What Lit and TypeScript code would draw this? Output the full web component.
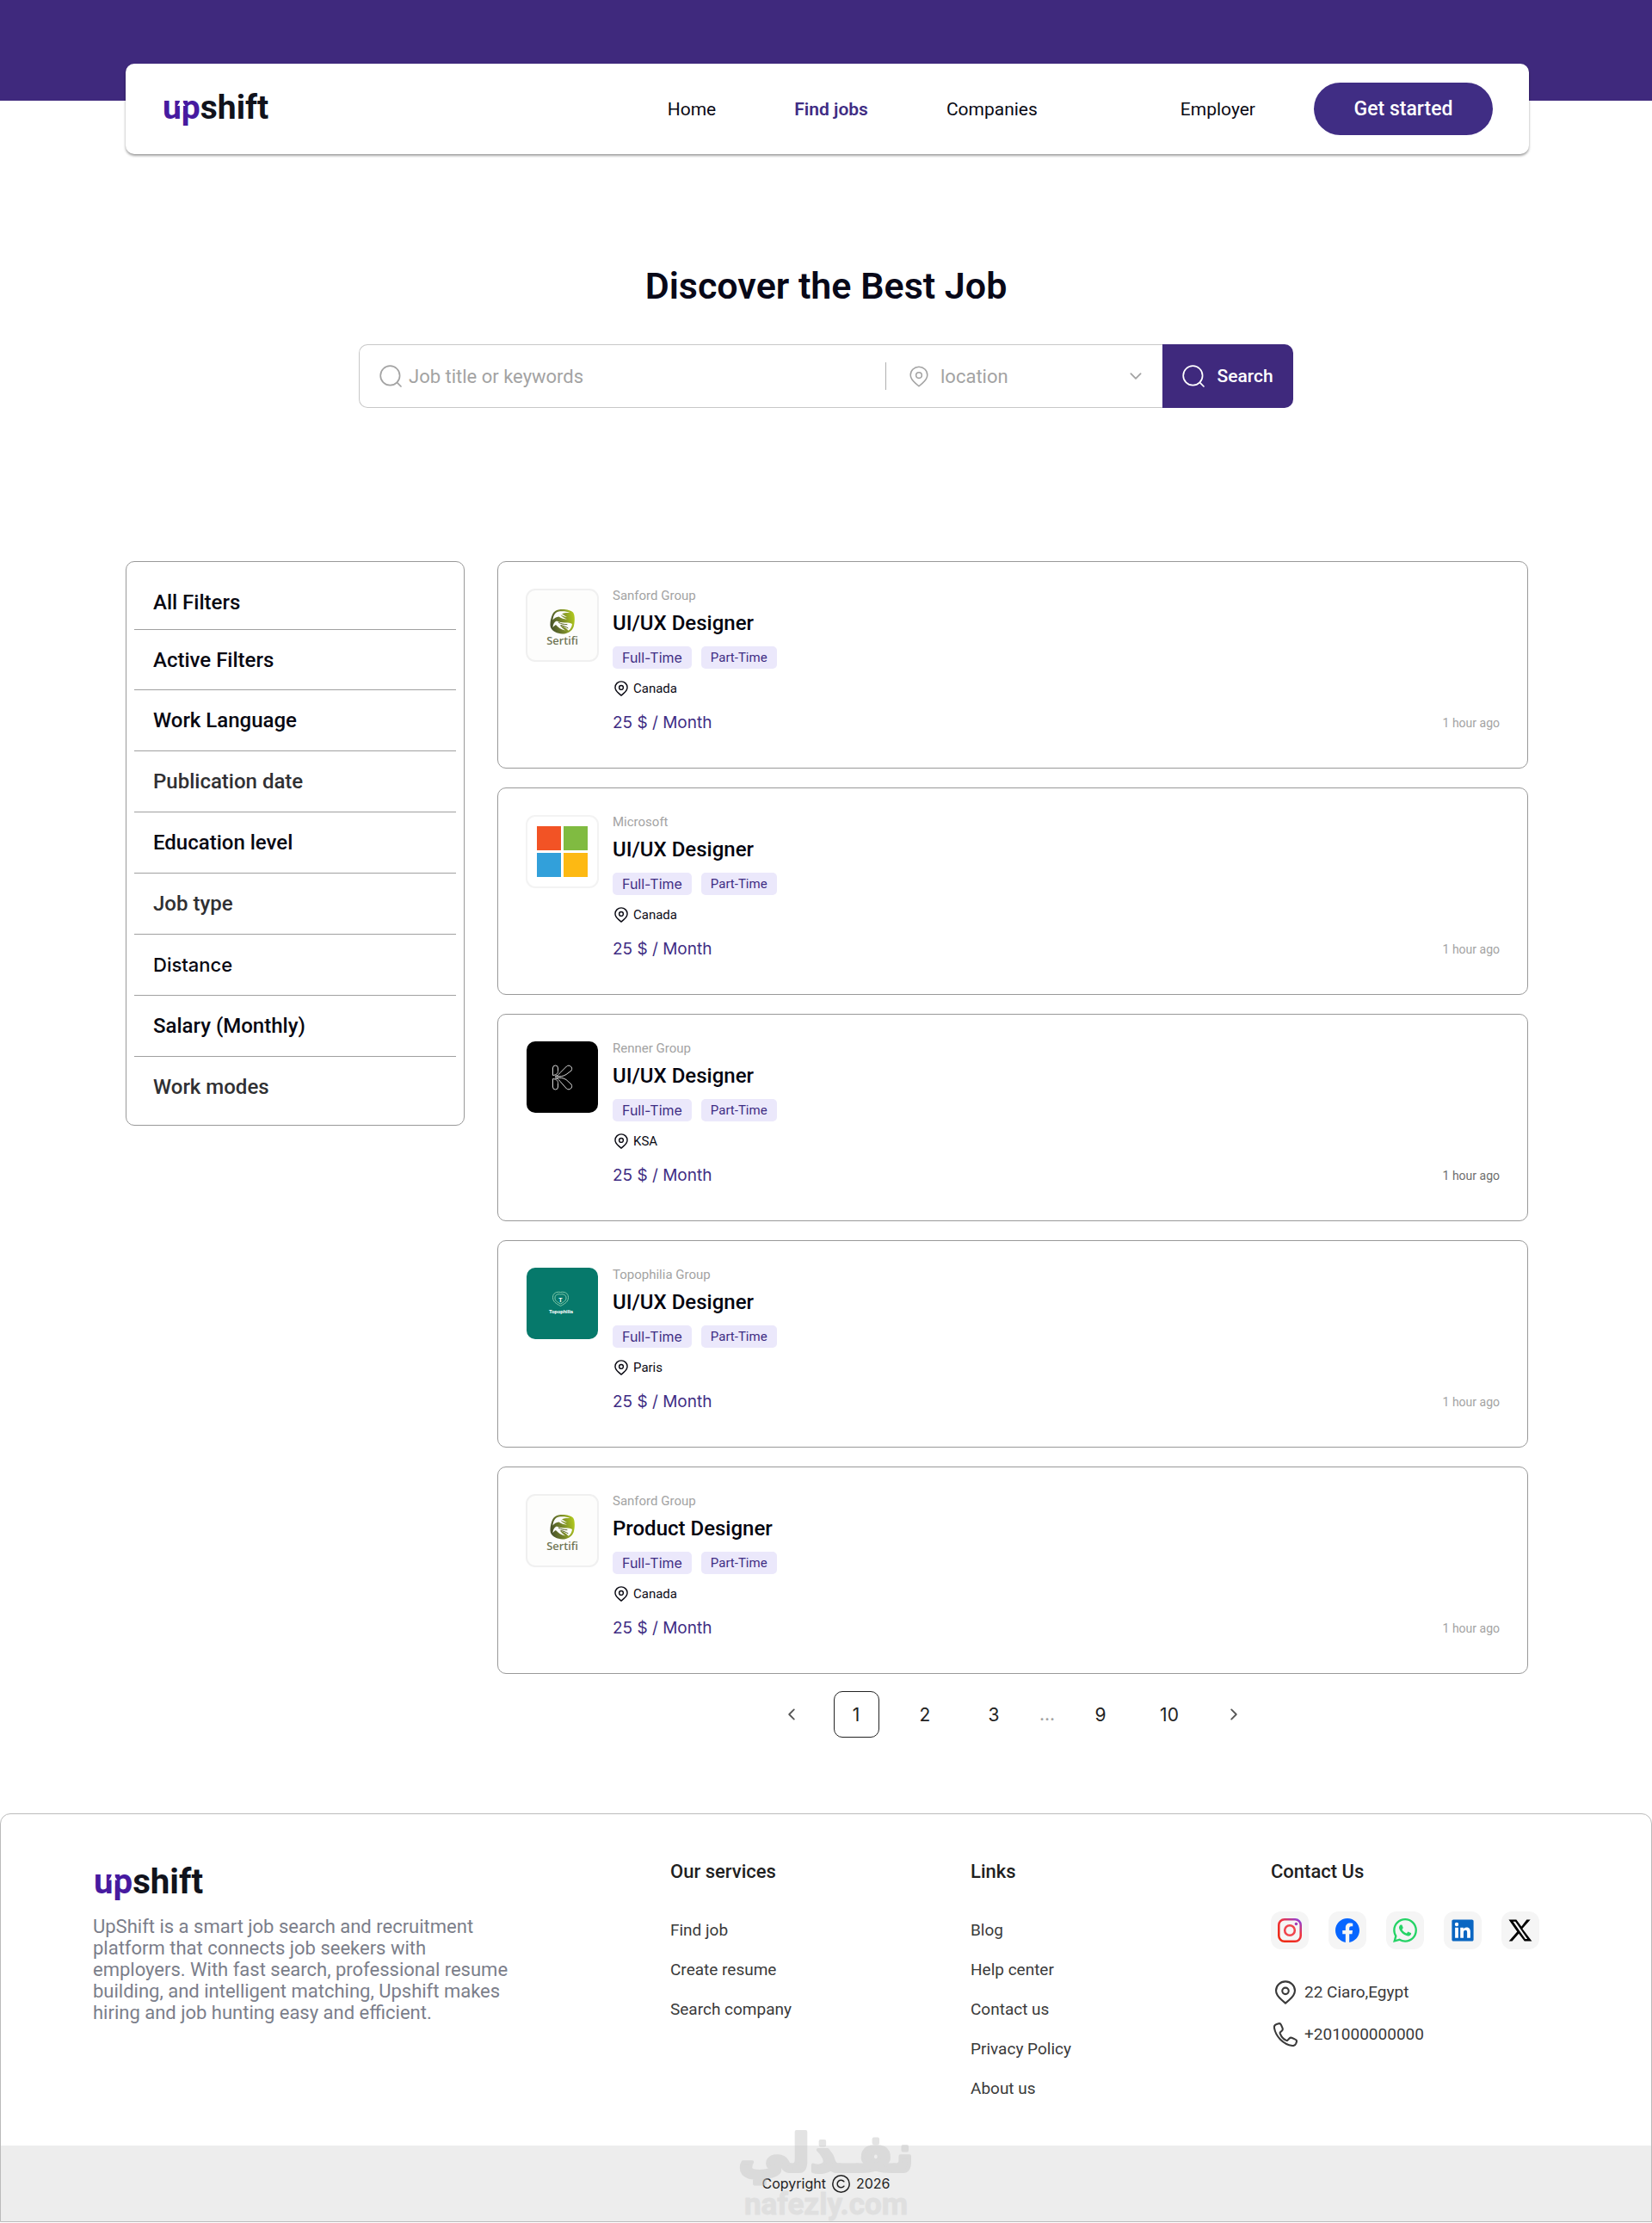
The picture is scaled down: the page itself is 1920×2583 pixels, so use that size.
import { LitElement, html, css, svg } from "lit";
import { customElement, property, state } from "lit/decorators.js";
import { classMap } from "lit/directives/class-map.js";

const PIN_OUTLINE = "M12 1.2c5.2 0 9.4 4 9.4 9.1 0 4-2.6 6.6-5.6 9.2L12 22.8l-3.8-3.3c-3-2.6-5.6-5.2-5.6-9.2 0-5.1 4.2-9.1 9.4-9.1z";

const pinIcon = html`<svg class="pin" viewBox="0 0 24 24" fill="none" stroke="currentColor" stroke-width="1.9" stroke-linejoin="round" aria-hidden="true">
  <path d=${PIN_OUTLINE} /><circle cx="12" cy="10.6" r="3.2" />
</svg>`;

const searchIcon = html`<svg class="glass" viewBox="0 0 26 26" fill="none" stroke="currentColor" stroke-width="1.7" stroke-linecap="round" aria-hidden="true">
  <circle cx="12.4" cy="12.4" r="11.2" /><path d="M20.4 20.4 25 25" />
</svg>`;

const chevron = (d: string) => html`<svg class="chevron" viewBox="0 0 16 16" fill="none" stroke="currentColor" stroke-width="1.6" stroke-linecap="round" stroke-linejoin="round" aria-hidden="true"><path d=${d} /></svg>`;

@customElement("upshift-logo")
class UpshiftLogo extends LitElement {
  static styles = css`
    :host { display: block; }
    svg { display: block; width: 100%; overflow: visible; }
    .word { font: 700 39px Roboto, "Liberation Sans", sans-serif; fill: #11131c; }
    .accent { fill: #471aa0; }
    .arrow { fill: #fff; }
  `;
  render() {
    return html`<svg viewBox="0 0 124 44" role="img" aria-label="upshift">
      <text class="word" x="-1" y="33"><tspan class="accent">up</tspan>shift</text>
      <path class="arrow" d="M20.500 11l5 7h-3v7h-3v-7h-3.500z" />
    </svg>`;
  }
}

@customElement("company-mark")
class CompanyMark extends LitElement {
  @property() name = "";
  static styles = css`
    :host { display: block; width: 85px; height: 85px; }
    svg { display: block; width: 85px; height: 85px; }
    .sertifi { font: 500 13px "Noto Sans", sans-serif; fill: #6c7350; }
    .topo { font: 700 6px Roboto, sans-serif; fill: #fff; }
    .topo-t { font: 700 7px Roboto, sans-serif; fill: #fff; }
  `;

  private sertifi() {
    return svg`
      <defs><linearGradient id="leaf" x1="0" y1=".6" x2="1" y2=".4"><stop offset="0" stop-color="#46502a"/><stop offset=".5" stop-color="#77872a"/><stop offset="1" stop-color="#b0c81e"/></linearGradient></defs>
      <rect x="1" y="1" width="83" height="83" rx="10" fill="#fdfdfc" stroke="#f0f0f0" stroke-width="2"/>
      <path fill="url(#leaf)" d="M38 24.500c6-1.200 14 0 17 3 2.500 3 2.200 12 .6 17-2 5.500-8 8.200-13 8-6-.3-12-3.200-13.600-7.500-1.400-4.500.5-12 2.500-16 1.500-2.700 4-4 6.500-4.500z"/>
      <path fill="#fdfdfc" d="M31.500 36.500c.4-5 2.500-8.800 6-9.800 4.500-1 10.500-.4 13.800 1.300-4-.2-7 .2-9.300 1.300 2.300 1.200 4 2.700 6 3.800-3-.4-5.300-1.400-7.500-2.800 1.500 2.300 4.200 4.200 7.500 5.200-3.600 0-7-1-9.500-3-2.800.4-5.500 1.700-7 4z"/>
      <path fill="#fdfdfc" d="M36 37.500c3.400 1.800 7 2 10.500 1.900 3 0 5.600.4 7.500 1.600-.4 3.400-1.900 6.300-4.300 7.800-2.700-3.400-6.300-5-10.200-6.500 1.600 2.200 4 4.200 6.500 6.200-5-1.200-8.600-3.500-11-6.500-1.200.5-2.400 1.500-3.500 3 .2-3.500 1.700-6.500 4.500-7.500z"/>
      <path fill="none" stroke="#5c6828" stroke-width="1" stroke-linecap="round" d="M38.500 39.500c3 1.600 6 2 9.500 2.200M41 42.500c3 .6 5.500 1.600 8 3.200"/>
      <text class="sertifi" x="42.500" y="65" text-anchor="middle">Sertifi</text>`;
  }

  private microsoft() {
    return svg`
      <rect x="1" y="1" width="83" height="83" rx="10" fill="#fff" stroke="#f3f3f3" stroke-width="2"/>
      <rect x="13" y="13" width="28" height="28" fill="#f25325"/><rect x="44" y="13" width="28" height="28" fill="#80bb41"/>
      <rect x="13" y="44" width="28" height="28" fill="#32a0da"/><rect x="44" y="44" width="28" height="28" fill="#fdb913"/>`;
  }

  private renner() {
    return svg`
      <rect x="1" y="0" width="83" height="83" rx="10" fill="#000"/>
      <g fill="none" stroke="#d8d8d8" stroke-width="1">
        <path d="M31.500 39.500V31a3 3 0 0 1 6 0v3.500c0 3-2 4.500-6 5z"/>
        <path d="M31.500 43.500V53a3 3 0 0 0 6 0v-4.500c0-3-2-4.500-6-5z"/>
        <path d="M34 40.500c3-.5 4-1.500 6-4l7.500-7.500c3-2.500 8 1 5.500 5l-6 4.500c-4 2.500-7 2.500-13 2z"/>
        <path d="M34 42.500c3 .5 4 1.500 6 4l7.500 8.500c3 2.500 8-1 5.500-5l-6-5.500c-4-2.500-7-2.500-13-2z"/>
      </g>`;
  }

  private topophilia() {
    return svg`
      <rect x="1" y="0" width="83" height="83" rx="10" fill="#06796b"/>
      <g fill="none" stroke="#8fd0b0" stroke-width=".9">
        <path d="M40.500 28.500c4.500-1 9 1 9 6s-3.500 7-9 10c-5.500-3-9-5-9-10s4.500-7 9-6z"/>
        <path d="M40.500 31c3.500-.8 6.500.8 6.500 4s-2 4.500-6.500 7c-4.500-2.500-6.500-3.500-6.500-7s3-4.800 6.500-4z"/>
      </g>
      <text class="topo-t" x="40.500" y="39.500" text-anchor="middle">T</text>
      <text class="topo" x="41" y="53" text-anchor="middle">Topophilia</text>`;
  }

  render() {
    const marks: Record<string, () => unknown> = {
      sertifi: () => this.sertifi(), microsoft: () => this.microsoft(),
      renner: () => this.renner(), topophilia: () => this.topophilia(),
    };
    return html`<svg viewBox="0 0 85 85" aria-hidden="true">${marks[this.name]?.()}</svg>`;
  }
}

interface Job { mark: string; company: string; title: string; place: string; recent?: boolean; }

@customElement("job-card")
class JobCard extends LitElement {
  @property({ attribute: false }) job!: Job;
  static styles = css`
    :host { display: block; }
    .card { box-sizing: border-box; min-height: 241px; display: flex; gap: 16px; align-items: flex-start; padding: 31px 32px; border: 1px solid #999; border-radius: 10px; background: #fff; }
    .body { flex: 1; display: flex; flex-direction: column; align-items: flex-start; }
    .company { font-size: 15px; line-height: 16px; color: #a3a3a3; }
    h2 { margin: 10px 0 13px; font-size: 24px; line-height: 28px; font-weight: 500; color: #03030f; }
    .chips { display: flex; gap: 11px; margin: 0; padding: 0; list-style: none; }
    .chip { padding: 0 11px; border-radius: 5px; background: #ebe8fb; color: #3f2d84; font-size: 15px; line-height: 26px; }
    .full { font-family: Inter, sans-serif; font-size: 16px; }
    .place { display: flex; align-items: center; gap: 4px; margin-top: 13px; font-size: 15px; line-height: 20px; color: #0b0b14; }
    .pin { width: 20px; height: 18px; }
    .foot { align-self: stretch; display: flex; justify-content: space-between; align-items: center; margin-top: 18px; line-height: 24px; }
    .pay { font-family: Inter, sans-serif; font-size: 19px; color: #3f2d84; }
    time { font-size: 14px; color: #a3a3a3; }
    .recent { color: #6e6e6e; }
  `;
  render() {
    const j = this.job;
    return html`<article class="card">
      <company-mark name=${j.mark}></company-mark>
      <div class="body">
        <span class="company">${j.company}</span>
        <h2>${j.title}</h2>
        <ul class="chips"><li class="chip full">Full-Time</li><li class="chip">Part-Time</li></ul>
        <span class="place">${pinIcon}${j.place}</span>
        <div class="foot"><span class="pay">25 $ / Month</span><time class=${classMap({ recent: !!j.recent })}>1 hour ago</time></div>
      </div>
    </article>`;
  }
}

@customElement("site-header")
class SiteHeader extends LitElement {
  static styles = css`
    :host { display: block; padding: 74px 143px 0 146px; background: linear-gradient(#3f297d 117px, transparent 117px); }
    .bar { display: flex; align-items: center; box-sizing: border-box; min-height: 105px; padding: 0 42px 0 44px; border-radius: 10px; background: #fff; box-shadow: 0 2px 3px rgba(0, 0, 0, 0.38); }
    upshift-logo { width: 124px; }
    nav { display: flex; gap: 91px; margin-left: auto; }
    a { color: #0a0a14; text-decoration: none; font-size: 21px; line-height: 28px; }
    .current { color: #3f2d84; font-weight: 600; }
    .actions { display: flex; align-items: center; gap: 68px; margin-left: 166px; }
    button { width: 208px; height: 61px; border: 0; border-radius: 31px; background: #402d84; color: #fff; font: 500 23px Roboto, sans-serif; }
  `;
  render() {
    return html`<header class="bar">
      <upshift-logo></upshift-logo>
      <nav><a href="#home">Home</a><a class="current" href="#jobs" aria-current="page">Find jobs</a><a href="#companies">Companies</a></nav>
      <div class="actions"><a href="#employer">Employer</a><button type="button">Get started</button></div>
    </header>`;
  }
}

@customElement("job-search")
class JobSearch extends LitElement {
  static styles = css`
    :host { display: block; }
    form { display: flex; width: min(1086px, 92%); height: 74px; margin: 0 auto; }
    .fields { flex: 1; display: flex; align-items: center; box-sizing: border-box; padding: 0 22px 0 23px; border: 1px solid #c8c8c8; border-right: 0; border-radius: 10px 0 0 10px; color: #a3a3a3; }
    label { display: flex; align-items: center; }
    .keywords { flex: 1; gap: 8px; }
    .location { width: 274px; gap: 12px; }
    input, select { flex: 1; min-width: 0; border: 0; padding: 0; background: none; outline: none; color: #a3a3a3; font: 400 21px Roboto, sans-serif; }
    input::placeholder { color: #a3a3a3; opacity: 1; }
    select { appearance: none; }
    .rule { width: 1px; height: 32px; margin-right: 25px; background: #b0b0b0; }
    .glass { width: 26px; height: 26px; }
    .pin { width: 26px; height: 25px; stroke-width: 1.5; }
    .chevron { width: 18px; height: 18px; }
    button { display: flex; align-items: center; justify-content: center; gap: 14px; width: 152px; border: 0; border-radius: 0 10px 10px 0; background: #3f297d; color: #fff; font: 500 21px Roboto, sans-serif; padding: 0; }
    input, select { font-size: 22px; }
  `;
  render() {
    return html`<form role="search" @submit=${(e: Event) => e.preventDefault()}>
      <div class="fields">
        <label class="keywords">${searchIcon}<input type="text" placeholder="Job title or keywords" aria-label="Job title or keywords" /></label>
        <span class="rule"></span>
        <label class="location">${pinIcon}<select aria-label="location"><option>location</option></select>${chevron("M3 5.500l5 5 5-5")}</label>
      </div>
      <button type="submit">${searchIcon}Search</button>
    </form>`;
  }
}

@customElement("filter-panel")
class FilterPanel extends LitElement {
  static styles = css`
    :host { display: block; }
    .panel { box-sizing: border-box; padding: 16px 9px 9px; border: 1px solid #999; border-radius: 10px; }
    ul { list-style: none; margin: 0; padding: 0; }
    li { border-top: 1px solid #a0a0a0; }
    li:first-child { border-top: 0; }
    button { display: block; width: 100%; height: 70px; padding: 0 22px; border: 0; background: none; text-align: left; color: #080812; font: 500 24px Roboto, sans-serif; }
    li:first-child button { height: 62px; }
    li:nth-child(2) button { height: 69px; }
    .soft { color: #303033; }
    .wide { font-family: Inter, sans-serif; font-size: 22px; }
  `;
  private items: [string, string][] = [
    ["All Filters", ""], ["Active Filters", ""], ["Work Language", ""], ["Publication date", "soft"], ["Education level", ""],
    ["Job type", "soft"], ["Distance", "wide"], ["Salary (Monthly)", ""], ["Work modes", "soft"],
  ];
  render() {
    return html`<aside class="panel"><ul>${this.items.map(([label, tone]) => html`<li><button type="button" class=${tone}>${label}</button></li>`)}</ul></aside>`;
  }
}

@customElement("page-numbers")
class PageNumbers extends LitElement {
  @state() private current = 1;
  static styles = css`
    :host { display: block; }
    nav { display: flex; justify-content: center; gap: 27px; }
    button { box-sizing: border-box; width: 53px; height: 54px; padding: 0; border: 1px solid transparent; border-radius: 10px; background: none; color: #232323; font: 400 21px Inter, sans-serif; }
    .step { width: 43px; display: grid; place-items: center; color: #555; }
    .current { border-color: #232323; }
    .dots { display: flex; justify-content: center; width: 17px; color: #a3a3a3; font: 400 21px/54px Inter, sans-serif; }
    .chevron { width: 18px; height: 18px; }
  `;
  private page(n: number) {
    return html`<button type="button" class=${classMap({ current: n === this.current })} @click=${() => (this.current = n)}>${n}</button>`;
  }
  render() {
    return html`<nav aria-label="Pagination">
      <button type="button" class="step" aria-label="Previous">${chevron("M10.500 3l-5 5 5 5")}</button>
      ${[1, 2, 3].map((n) => this.page(n))}<span class="dots">...</span>${[9, 10].map((n) => this.page(n))}
      <button type="button" class="step" aria-label="Next">${chevron("M5.500 3l5 5-5 5")}</button>
    </nav>`;
  }
}

const socials: [string, unknown][] = [
  ["Instagram", svg`<defs><linearGradient id="ig" x1="0.2" y1="1" x2="0.95" y2="0"><stop offset="0" stop-color="#ee2a12"/><stop offset=".6" stop-color="#ef3340"/><stop offset="1" stop-color="#8a3fe0"/></linearGradient></defs>
    <rect x="1.100" y="1.100" width="21.800" height="21.800" rx="5.600" fill="none" stroke="url(#ig)" stroke-width="2.200"/><circle cx="12" cy="12" r="5" fill="none" stroke="#f0444c" stroke-width="2.200"/><circle cx="18.400" cy="5.600" r="1.500" fill="#a63bb4"/>`],
  ["Facebook", svg`<path fill="#0866ff" d="M24 12.073c0-6.627-5.373-12-12-12s-12 5.373-12 12c0 5.990 4.388 10.954 10.125 11.854v-8.385H7.078v-3.470h3.047V9.430c0-3.007 1.792-4.669 4.533-4.669 1.312 0 2.686.235 2.686.235v2.953H15.830c-1.491 0-1.956.925-1.956 1.874v2.250h3.328l-.532 3.470h-2.796v8.385C19.612 23.027 24 18.062 24 12.073z"/>`],
  ["WhatsApp", svg`<path fill="#25d366" d="M17.472 14.382c-.297-.149-1.758-.867-2.030-.967-.273-.099-.471-.148-.670.150-.197.297-.767.966-.940 1.164-.173.199-.347.223-.644.075-.297-.150-1.255-.463-2.390-1.475-.883-.788-1.480-1.761-1.653-2.059-.173-.297-.018-.458.130-.606.134-.133.298-.347.446-.520.149-.174.198-.298.298-.497.099-.198.050-.371-.025-.520-.075-.149-.669-1.612-.916-2.207-.242-.579-.487-.500-.669-.510-.173-.008-.371-.010-.570-.010-.198 0-.520.074-.792.372-.272.297-1.040 1.016-1.040 2.479 0 1.462 1.065 2.875 1.213 3.074.149.198 2.096 3.200 5.077 4.487.709.306 1.262.489 1.694.625.712.227 1.360.195 1.871.118.571-.085 1.758-.719 2.006-1.413.248-.694.248-1.289.173-1.413-.074-.124-.272-.198-.570-.347m-5.421 7.403h-.004a9.870 9.870 0 0 1-5.031-1.378l-.361-.214-3.741.982.998-3.648-.235-.374a9.860 9.860 0 0 1-1.510-5.260c.001-5.450 4.436-9.884 9.888-9.884 2.640 0 5.122 1.030 6.988 2.898a9.825 9.825 0 0 1 2.893 6.994c-.003 5.450-4.437 9.884-9.885 9.884m8.413-18.297A11.815 11.815 0 0 0 12.050 0C5.495 0 .160 5.335.157 11.892c0 2.096.547 4.142 1.588 5.945L.057 24l6.305-1.654a11.882 11.882 0 0 0 5.683 1.448h.005c6.554 0 11.890-5.335 11.893-11.893a11.821 11.821 0 0 0-3.480-8.413z"/>`],
  ["LinkedIn", svg`<g transform="translate(1.200 1.200) scale(.9)"><path fill="#fff" d="M2 2h20v20H2z"/><path fill="#0a66c2" d="M20.447 20.452h-3.554v-5.569c0-1.328-.027-3.037-1.852-3.037-1.853 0-2.136 1.445-2.136 2.939v5.667H9.351V9h3.414v1.561h.046c.477-.900 1.637-1.850 3.370-1.850 3.601 0 4.267 2.370 4.267 5.455v6.286zM5.337 7.433a2.062 2.062 0 0 1-2.063-2.065 2.064 2.064 0 1 1 2.063 2.065zm1.782 13.019H3.555V9h3.564v11.452zM22.225 0H1.771C.792 0 0 .774 0 1.729v20.542C0 23.227.792 24 1.771 24h20.451C23.200 24 24 23.227 24 22.271V1.729C24 .774 23.200 0 22.222 0h.003z"/></g>`],
  ["X", svg`<path fill="#000" fill-rule="evenodd" d="M18.300 1.200h3.700l-8 9.100L23.500 22.800h-7.400l-5.700-7.500-6.500 7.500H.600l8.200-9.600L.400 1.200H8l5.100 6.900ZM16.900 20.600h2.100L7 3.300H4.700Z"/>`],
];

@customElement("site-footer")
class SiteFooter extends LitElement {
  static styles = css`
    :host { display: block; }
    footer { position: relative; box-sizing: border-box; border: 1px solid #bbb; border-radius: 12px 12px 0 0; overflow: hidden; }
    .top { display: grid; grid-template-columns: 671fr 349fr 349fr 442fr; padding: 53px 0 54px 107px; }
    upshift-logo { width: 128px; margin: 5px 0 0 2px; }
    .about { max-width: 500px; margin: 15px 0 0; font-size: 22px; line-height: 25px; color: #7b7e8a; }
    h3 { margin: 0 0 42px; font-size: 22px; line-height: 28px; font-weight: 500; color: #1f1f1f; }
    ul { margin: 0; padding: 0; list-style: none; display: grid; gap: 22px; }
    a { color: #3a3a3a; font-size: 19px; line-height: 24px; text-decoration: none; display: block; }
    .contact h3 { margin-bottom: 32px; }
    .social { display: flex; gap: 23px; margin-bottom: 35px; }
    .tile { display: grid; place-items: center; width: 44px; height: 44px; border-radius: 12px; background: #f5f5f5; }
    .tile svg { width: 28px; height: 28px; }
    .line { display: flex; align-items: center; gap: 8px; min-height: 30px; margin-bottom: 19px; }
    .line svg { width: 28px; height: 28px; margin-left: 3px; stroke-width: 1.8; }
    .bar { box-sizing: border-box; min-height: 88px; display: flex; align-items: center; justify-content: center; gap: 7px; background: #ededed; color: #222; font: 400 16px Inter, sans-serif; }
    .copy { width: 21px; height: 21px; }
    .mark { position: absolute; left: 50%; bottom: 0; width: 214px; height: 112px; margin-left: -107px; pointer-events: none; overflow: visible; fill: #c8c8c8; stroke: #c8c8c8; stroke-linejoin: round; }
    .ar { font: 700 60px "DejaVu Sans", sans-serif; stroke-width: 4px; opacity: 0.5; }
    .en { font: 700 35px Roboto, sans-serif; stroke-width: 1px; opacity: 0.35; }
  `;
  private list(items: string[]) {
    return html`<ul>${items.map((t) => html`<li><a href="#${t.toLowerCase().replace(/ /g, "-")}">${t}</a></li>`)}</ul>`;
  }
  render() {
    return html`<footer>
      <div class="top">
        <section>
          <upshift-logo></upshift-logo>
          <p class="about">UpShift is a smart job search and recruitment platform that connects job seekers with employers. With fast search, professional resume building, and intelligent matching, Upshift makes hiring and job hunting easy and efficient.</p>
        </section>
        <section><h3>Our services</h3>${this.list(["Find job", "Create resume", "Search company"])}</section>
        <section><h3>Links</h3>${this.list(["Blog", "Help center", "Contact us", "Privacy Policy", "About us"])}</section>
        <section class="contact">
          <h3>Contact Us</h3>
          <div class="social">${socials.map(([name, art]) => html`<a class="tile" href="#${name.toLowerCase()}" aria-label=${name}><svg viewBox="0 0 24 24" aria-hidden="true">${art}</svg></a>`)}</div>
          <a class="line" href="#map">${pinIcon}22 Ciaro,Egypt</a>
          <a class="line" href="tel:+201000000000"><svg viewBox="0 0 24 24" fill="none" stroke="currentColor" stroke-linejoin="round" aria-hidden="true"><path d="M3.100 1.800 4.700 1.200c1.200-.4 2.500.2 3 1.300l1.300 3c.4 1 .2 2.100-.6 2.800L6.900 9.700c-.3.300-.4.700-.3 1.100 1 3 3.400 5.800 6.300 7.100.4.200.9.100 1.200-.2l1.600-1.700c.8-.8 2-1 3-.6l3 1.400c1.200.5 1.700 1.800 1.200 3l-.5 1.300c-.6 1.400-2 2.200-3.500 2C9.600 21.800 2.200 13.700.8 5.200.6 3.700 1.600 2.300 3.100 1.800z"/></svg>+201000000000</a>
        </section>
      </div>
      <div class="bar"><span>Copyright</span><svg class="copy" viewBox="0 0 21 21" fill="none" stroke="currentColor" stroke-width="1.500" stroke-linecap="round" role="img" aria-label="copyright"><circle cx="10.500" cy="10.500" r="9.700"/><path d="M13.800 7.800a4.300 4.300 0 1 0 0 5.400"/></svg><span>2026</span></div>
      <svg class="mark" viewBox="0 0 214 112" aria-hidden="true">
        <text class="ar" x="107" y="54" text-anchor="middle" direction="rtl">نفـذلي</text>
        <text class="en" x="107" y="104" text-anchor="middle">nafezly.com</text>
      </svg>
    </footer>`;
  }
}

@customElement("app-root")
class AppRoot extends LitElement {
  static styles = css`
    :host { display: block; background: #fff; font-family: Roboto, "Liberation Sans", sans-serif; color: #0a0a14; }
    h1 { margin: 128px 0 43px; text-align: center; font-size: 43px; line-height: 50px; font-weight: 600; color: #080818; }
    .layout { display: grid; grid-template-columns: 394px minmax(0, 1fr); gap: 38px; align-items: start; margin-top: 178px; padding: 0 144px 0 146px; }
    .jobs { display: flex; flex-direction: column; gap: 22px; }
    page-numbers { margin-top: 20px; }
    site-footer { margin-top: 88px; }
  `;
  private jobs: Job[] = [
    { mark: "sertifi", company: "Sanford Group", title: "UI/UX Designer", place: "Canada" },
    { mark: "microsoft", company: "Microsoft", title: "UI/UX Designer", place: "Canada" },
    { mark: "renner", company: "Renner Group", title: "UI/UX Designer", place: "KSA", recent: true },
    { mark: "topophilia", company: "Topophilia Group", title: "UI/UX Designer", place: "Paris" },
    { mark: "sertifi", company: "Sanford Group", title: "Product Designer", place: "Canada" },
  ];
  render() {
    return html`
      <site-header></site-header>
      <main>
        <h1>Discover the Best Job</h1>
        <job-search></job-search>
        <div class="layout">
          <filter-panel></filter-panel>
          <div>
            <div class="jobs">${this.jobs.map((job) => html`<job-card .job=${job}></job-card>`)}</div>
            <page-numbers></page-numbers>
          </div>
        </div>
      </main>
      <site-footer></site-footer>`;
  }
}
